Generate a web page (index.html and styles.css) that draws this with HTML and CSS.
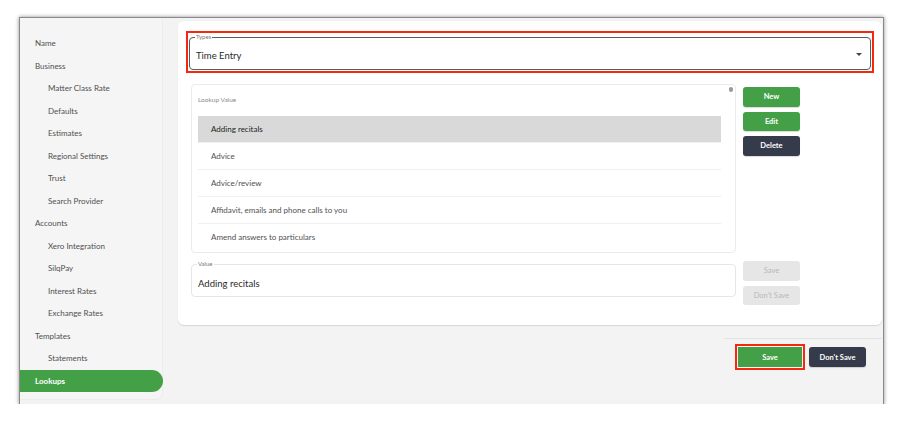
FILE: index.html
```html
<!DOCTYPE html>
<html>
<head>
    <title>Settings - Lookups</title>
    <link rel="stylesheet" href="styles.css">
</head>
<body>

<div class="window">
    <nav class="sidebar">
        <div class="nav-item">Name</div>
        <div class="nav-item">Business</div>
        <div class="nav-item sub">Matter Class Rate</div>
        <div class="nav-item sub">Defaults</div>
        <div class="nav-item sub">Estimates</div>
        <div class="nav-item sub">Regional Settings</div>
        <div class="nav-item sub">Trust</div>
        <div class="nav-item sub">Search Provider</div>
        <div class="nav-item">Accounts</div>
        <div class="nav-item sub">Xero Integration</div>
        <div class="nav-item sub">SilqPay</div>
        <div class="nav-item sub">Interest Rates</div>
        <div class="nav-item sub">Exchange Rates</div>
        <div class="nav-item">Templates</div>
        <div class="nav-item sub">Statements</div>
        <div class="nav-item active">Lookups</div>
    </nav>

    <main class="main">
        <div class="card">
            <div class="highlight">
                <fieldset class="field select-field">
                    <legend>Types</legend>
                    <span class="field-value">Time Entry</span>
                    <span class="arrow"></span>
                </fieldset>
            </div>

            <div class="lookup-row">
                <div class="lookup-panel">
                    <div class="panel-label">Lookup Value</div>
                    <span class="scroll-thumb"></span>
                    <div class="lookup-list">
                        <div class="lookup-item selected">Adding recitals</div>
                        <div class="lookup-item">Advice</div>
                        <div class="lookup-item">Advice/review</div>
                        <div class="lookup-item">Affidavit, emails and phone calls to you</div>
                        <div class="lookup-item">Amend answers to particulars</div>
                    </div>
                </div>
                <div class="btn-col">
                    <button class="btn green">New</button>
                    <button class="btn green">Edit</button>
                    <button class="btn dark">Delete</button>
                </div>
            </div>

            <div class="value-row">
                <fieldset class="field value-field">
                    <legend>Value</legend>
                    <span class="field-value">Adding recitals</span>
                </fieldset>
                <div class="btn-col value-btns">
                    <button class="btn disabled">Save</button>
                    <button class="btn disabled">Don't Save</button>
                </div>
            </div>
        </div>

        <div class="footer">
            <div class="footer-inner">
                <span class="save-outline"><button class="btn green wide">Save</button></span>
                <button class="btn dark wide">Don't Save</button>
            </div>
        </div>
    </main>
</div>

</body>
</html>
```

FILE: styles.css
```css
body {
    margin: 0;
    background: #ffffff;
    font-family: 'Lato', 'Noto Sans', sans-serif;
    color: #333;
}

.window {
    display: flex;
    margin: 18px 0 0 20px;
    width: 863px;
    height: 386px;
    background: #f3f3f3;
    box-shadow: 0 0 0 1px #8a8a8a, 0 0 4px 1px rgba(0, 0, 0, 0.45);
}

/* sidebar */
.sidebar {
    width: 143px;
    height: 382px;
    padding-top: 14px;
    box-sizing: border-box;
    background: #f5f5f5;
    border-right: 1px solid #ececec;
    border-bottom: 1px solid #ececec;
    border-radius: 0 0 7px 0;
}

.nav-item {
    height: 22.5px;
    line-height: 22.5px;
    padding-left: 15px;
    font-size: 8px;
    color: #505050;
}

.nav-item.sub {
    padding-left: 28px;
}

.nav-item.active {
    background: #43a047;
    color: #fff;
    font-weight: bold;
    border-radius: 0 12px 12px 0;
    margin-right: -1px;
}

/* main area */
.main {
    flex: 1;
    padding: 3px 1px 0 15px;
}

.card {
    background: #fff;
    border-radius: 6px;
    padding: 10px 8px 20px 8px;
    box-shadow: 0 1px 1px rgba(0, 0, 0, 0.12);
}

.highlight {
    border: 2px solid #f3280f;
    padding: 1px;
}

.field {
    margin: 0;
    padding: 0 6px;
    min-width: 0;
    border-radius: 4px;
    position: relative;
}

.field legend {
    font-size: 6px;
    color: #777;
    padding: 0 1px;
    margin-left: -1px;
    line-height: 6px;
}

.select-field {
    height: 36px;
    box-sizing: border-box;
    border: 1.5px solid #5b5b5b;
    display: flex;
    align-items: center;
}

.field-value {
    font-size: 9.5px;
    color: #2a2a2a;
}

.select-field .field-value {
    margin-top: 1px;
}

.arrow {
    position: absolute;
    right: 8px;
    top: 13px;
    border-left: 3px solid transparent;
    border-right: 3px solid transparent;
    border-top: 3px solid #444;
}

/* lookup list */
.lookup-row, .value-row {
    display: flex;
    gap: 7px;
    padding: 0 4px 0 5px;
}

.lookup-row {
    margin-top: 11px;
}

.lookup-panel {
    width: 545px;
    box-sizing: border-box;
    border: 1px solid #ebebeb;
    border-radius: 4px;
    padding: 10px 14px 1px 6px;
    position: relative;
}

.panel-label {
    font-size: 6.5px;
    line-height: 10px;
    color: #8a8a8a;
    margin-bottom: 11px;
}

.scroll-thumb {
    position: absolute;
    right: 2px;
    top: 2px;
    width: 4px;
    height: 5px;
    border-radius: 2px;
    background: #9a9a9a;
}

.lookup-item {
    height: 27px;
    line-height: 27px;
    box-sizing: border-box;
    padding-left: 13px;
    font-size: 8px;
    color: #505050;
    border-bottom: 1px solid #f0f0f0;
}

.lookup-item.selected {
    background: #d9d9d9;
    color: #1e1e1e;
}

.lookup-item:last-child {
    border-bottom: none;
}

/* buttons */
.btn-col {
    display: flex;
    flex-direction: column;
    gap: 5px;
    margin-top: 3px;
}

.btn {
    width: 57px;
    height: 19.5px;
    border: none;
    border-radius: 3px;
    font-family: 'Lato', 'Noto Sans', sans-serif;
    font-size: 7.5px;
    font-weight: bold;
    color: #fff;
    padding: 0;
    box-shadow: 0 1px 1px rgba(0, 0, 0, 0.15);
}

.btn.green {
    background: #43a047;
}

.btn.dark {
    background: #353b4a;
}

.btn.disabled {
    background: #e6e6e6;
    color: #b8b8b8;
    font-weight: normal;
    box-shadow: none;
}

/* value field */
.value-row {
    margin-top: 8px;
}

.value-field {
    width: 545px;
    height: 36px;
    box-sizing: border-box;
    border: 1px solid #e6e6e6;
    padding-top: 4px;
}

.value-btns {
    margin-top: 0;
}

/* footer */
.footer {
    display: flex;
    justify-content: flex-end;
    margin-top: 13px;
}

.footer-inner {
    width: 158px;
    box-sizing: border-box;
    border-top: 1px solid #e2e2e2;
    padding: 5px 15px 0 11px;
    display: flex;
    align-items: center;
    gap: 4px;
}

.save-outline {
    display: inline-flex;
    border: 2px solid #f3280f;
    padding: 1px;
}

.btn.wide {
    height: 20px;
}

.save-outline .btn {
    width: 64px;
    border-radius: 0;
    box-shadow: none;
}
```
